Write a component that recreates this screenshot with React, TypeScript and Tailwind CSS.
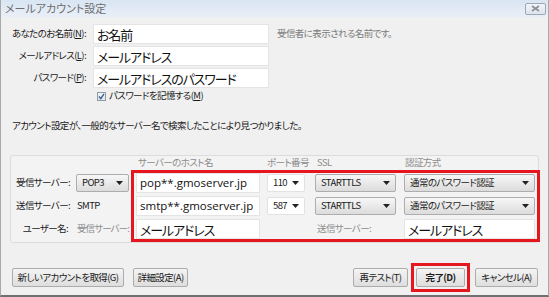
import React from "react";

const jp = "font-['Noto_Sans_CJK_JP','Noto_Sans',sans-serif] [font-feature-settings:'palt']";
const small = "text-[9.5px] tracking-[-0.6px] leading-none";

function Arrow() {
  return (
    <svg width="7" height="4" viewBox="0 0 7 4" className="shrink-0">
      <path d="M0 0h7L3.5 4z" fill="#222" />
    </svg>
  );
}

function Select({ label, width, white = false }: { label: string; width: string; white?: boolean }) {
  return (
    <div
      className={`${width} h-[18px] flex items-center justify-between pl-[5px] pr-[5px] rounded-[2px] border text-[#1a1a1a] ${small} ${
        white ? "bg-white border-[#e2e2e2]" : "bg-gradient-to-b from-[#f7f7f7] to-[#dcdcdc] border-[#adadad]"
      }`}
    >
      <span className="whitespace-nowrap">{label}</span>
      <Arrow />
    </div>
  );
}

function Field({ value, width, latin = false }: { value: string; width: string; latin?: boolean }) {
  return (
    <div
      className={`${width} h-[20px] shrink-0 flex items-center pl-[3px] bg-white border border-[#e4e4e4] text-[#111] whitespace-nowrap overflow-hidden leading-none ${
        latin ? "font-['Open_Sans',sans-serif] text-[11.5px]" : "text-[13px] tracking-[-1.1px]"
      }`}
    >
      {value}
    </div>
  );
}

function Btn({ label, width, bold = false }: { label: string; width: string; bold?: boolean }) {
  return (
    <div
      className={`${width} h-[19px] flex items-center justify-center rounded-[2px] border border-[#acacac] bg-gradient-to-b from-[#f4f4f4] to-[#dedede] text-[#1a1a1a] whitespace-nowrap ${small} ${
        bold ? "font-bold" : ""
      }`}
    >
      {label}
    </div>
  );
}

export default function App() {
  return (
    <div className={`w-[549px] h-[297px] bg-[#f0f0f0] flex flex-col border-l border-r border-[#a9a9a9] border-b-2 border-b-[#6f6f6f] overflow-hidden ${jp}`}>
      {/* Title bar */}
      <div className="h-[17px] shrink-0 flex items-center justify-between pl-[4px] pr-[2px] bg-gradient-to-b from-[#d9e5f3] to-[#e9eff8]">
        <span className="text-[11px] text-[#6d6d6d] leading-none">メールアカウント設定</span>
        <div className="w-[21px] h-[12px] flex items-center justify-center rounded-[2px] border border-[#9ea7b2] bg-gradient-to-b from-[#f2f5f9] to-[#dde4ec]">
          <svg width="9" height="7" viewBox="0 0 9 7">
            <path d="M1 1l7 5M8 1L1 6" stroke="#8a8f96" strokeWidth="1.6" />
          </svg>
        </div>
      </div>

      {/* Identity */}
      <div className={`mt-[7px] grid grid-cols-[85px_176px_auto] grid-rows-[20px_20px_20px] gap-x-[7px] gap-y-[2px] items-center ${small}`}>
        <span className="text-right text-[#1a1a1a] whitespace-nowrap">あなたのお名前(<u>N</u>):</span>
        <Field value="お名前" width="w-[176px]" />
        <span className="text-[#7a7a7a] ml-[1px] whitespace-nowrap">受信者に表示される名前です。</span>
        <span className="text-right text-[#1a1a1a] whitespace-nowrap">メールアドレス(<u>L</u>):</span>
        <Field value="メールアドレス" width="w-[176px]" />
        <span />
        <span className="text-right text-[#1a1a1a] whitespace-nowrap">パスワード(<u>P</u>):</span>
        <Field value="メールアドレスのパスワード" width="w-[176px]" />
        <span />
      </div>

      <div className="mt-[2px] ml-[96px] h-[12px] flex items-center gap-[3px]">
        <div className="w-[9px] h-[9px] border border-[#8f9aa6] bg-gradient-to-b from-[#f0f3f6] to-[#dfe5eb] flex items-center justify-center">
          <svg width="7" height="7" viewBox="0 0 7 7">
            <path d="M1 3.5l1.8 2.2L6 0.8" stroke="#3a5a88" strokeWidth="1.3" fill="none" />
          </svg>
        </div>
        <span className={`${small} text-[#1a1a1a]`}>パスワードを記憶する(<u>M</u>)</span>
      </div>

      <div className={`mt-[18px] ml-[11px] h-[12px] flex items-center ${small} text-[#1a1a1a] whitespace-nowrap`}>
        アカウント設定が、一般的なサーバー名で検索したことにより見つかりました。
      </div>

      {/* Server panel */}
      <div className="mt-[23px] ml-[9px] w-[529px] h-[88px] shrink-0 border border-[#dcdcdc] rounded-[3px] bg-[#f3f3f3] flex flex-col">
        <div className={`h-[14px] flex items-center ${small} text-[#8c8c8c] pl-[127px] whitespace-nowrap`}>
          <span className="w-[129px]">サーバーのホスト名</span>
          <span className="w-[50px]">ポート番号</span>
          <span className="w-[88px]">SSL</span>
          <span>認証方式</span>
        </div>

        <div className="flex items-start">
          {/* Row labels */}
          <div className={`w-[120px] shrink-0 pt-[3px] grid grid-cols-[59px_53px] gap-x-[6px] grid-rows-[20px_20px_20px] gap-y-[3px] items-center ${small}`}>
            <span className="flex justify-end whitespace-nowrap text-[#1a1a1a]">受信サーバー:</span>
            <Select label="POP3" width="w-[53px]" />
            <span className="flex justify-end whitespace-nowrap text-[#1a1a1a]">送信サーバー:</span>
            <span className="pl-[1px] text-[#1a1a1a]">SMTP</span>
            <span className="flex justify-end whitespace-nowrap text-[#1a1a1a] pr-[2px]">ユーザー名:</span>
            <span className="pl-[1px] text-[#8c8c8c] whitespace-nowrap tracking-[-0.9px]">受信サーバー:</span>
          </div>

          {/* Highlighted settings */}
          <div className="w-[409px] shrink-0 border-[3px] border-[#e5161e] flex flex-col gap-[3px] px-[2px]">
            <div className="h-[20px] flex items-center">
              <Field value="pop**.gmoserver.jp" width="w-[124px]" latin />
              <div className="ml-[7px]"><Select label="110" width="w-[38px]" white /></div>
              <div className="ml-[10px]"><Select label="STARTTLS" width="w-[81px]" /></div>
              <div className="ml-[8px]"><Select label="通常のパスワード認証" width="w-[131px]" /></div>
            </div>
            <div className="h-[20px] flex items-center">
              <Field value="smtp**.gmoserver.jp" width="w-[124px]" latin />
              <div className="ml-[7px]"><Select label="587" width="w-[38px]" white /></div>
              <div className="ml-[10px]"><Select label="STARTTLS" width="w-[81px]" /></div>
              <div className="ml-[8px]"><Select label="通常のパスワード認証" width="w-[131px]" /></div>
            </div>
            <div className="h-[20px] flex items-center">
              <Field value="メールアドレス" width="w-[124px]" />
              <span className={`ml-[57px] w-[79px] ${small} text-[#8c8c8c] whitespace-nowrap`}>送信サーバー:</span>
              <div className="ml-[8px]"><Field value="メールアドレス" width="w-[131px]" /></div>
            </div>
          </div>
        </div>
      </div>

      {/* Buttons */}
      <div className="mt-[20px] pl-[11px] pr-[10px] flex items-center">
        <Btn label="新しいアカウントを取得(G)" width="w-[112px]" />
        <div className="ml-[9px]"><Btn label="詳細設定(A)" width="w-[55px]" /></div>
        <div className="flex-1" />
        <Btn label="再テスト(T)" width="w-[55px]" />
        <div className="ml-[3px] border-[3px] border-[#e5161e] px-[2px] py-[2px]">
          <Btn label="完了(D)" width="w-[49px]" bold />
        </div>
        <div className="ml-[5px]"><Btn label="キャンセル(A)" width="w-[63px]" /></div>
      </div>
    </div>
  );
}
